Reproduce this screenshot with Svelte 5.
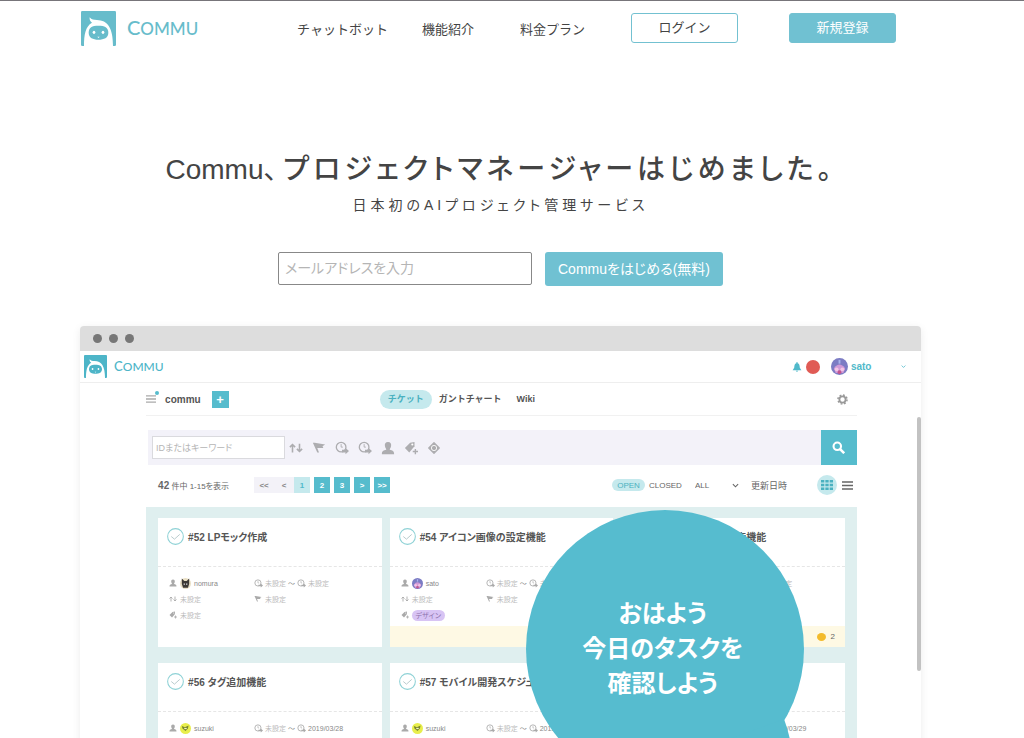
<script>
  let email = $state("");
  let keyword = $state("");
  let range = $state("ALL");

  const filters = ["arrows", "flag", "clock", "clock", "user", "tag", "target"];
  const pages = ["<<", "<", "1", "2", "3", ">", ">>"];

  const tickets = [
    { id: 52, title: "LPモック作成", user: "nomura", due: "未設定" },
    { id: 54, title: "アイコン画像の設定機能", user: "sato", due: "未設定", tag: "デザイン", footer: true },
    { id: 55, title: "アカウントの検索機能", user: "sato", due: "未設定", footer: true, comments: 2 },
    { id: 56, title: "タグ追加機能", user: "suzuki", due: "2019/03/28" },
    { id: 57, title: "モバイル開発スケジュール", user: "suzuki", due: "2019/03/28" },
    { id: 58, title: "通知機能", user: "suzuki", due: "2019/03/29" },
  ];
</script>

{#snippet icon(name, size = 14)}
  <svg class="icon" width={size} height={size} viewBox="0 0 16 16" aria-hidden="true"><use href="#{name}" /></svg>
{/snippet}

{#snippet logo()}
  <svg class="mark" viewBox="0 0 105 105" aria-hidden="true">
    <rect width="105" height="105" rx="4" fill="currentColor" />
    <path d="M9 105 C9 72 13 46 33 35 C27 31 25 25 26 19 C32 26 38 27 48 27 C80 28 96 50 96 105 Z" fill="#fff" />
    <path d="M23 65 C23 49 33 44 52 44 C71 44 82 49 82 65 C82 80 69 86 52 86 C36 86 23 80 23 65 Z" fill="currentColor" />
    <ellipse cx="39" cy="64" rx="4" ry="5" fill="#fff" />
    <ellipse cx="66" cy="64" rx="4" ry="5" fill="#fff" />
    <path d="M49 77 h7 l-3.500 4 z" fill="#fff" />
  </svg>
  <span class="wordmark">C<small>OMMU</small></span>
{/snippet}

{#snippet avatar(user)}
  <svg class="avatar" viewBox="0 0 18 18" aria-hidden="true">
    {#if user === "nomura"}
      <circle cx="9" cy="9" r="9" fill="#e9dfc4" />
      <path d="M3 1 L7 5 H11 L15 1 L15 10 L13 16 H5 L3 10 Z" fill="#3d3935" />
      <path d="M6 10 h2 M10 10 h2" stroke="#eee" stroke-width="2" />
    {:else if user === "suzuki"}
      <circle cx="9" cy="9" r="9" fill="#e8ee4c" />
      <path d="M3 5 L8 7 L14 4 L13 9 L9 13 L4 9 Z" fill="#77842f" />
      <path d="M7 9 h4" stroke="#f5f7c0" stroke-width="2" />
    {:else}
      <circle cx="9" cy="9" r="9" fill="#7c7cc4" />
      <path d="M3 11 Q9 3 15 11 L13 16 H5 Z" fill="#d09ad8" />
      <circle cx="6" cy="12" r="2" fill="#f4c5e4" />
      <circle cx="12" cy="12" r="2" fill="#f4c5e4" />
      <path d="M8 2 h2 v4 h-2 z" fill="#a9b4ec" />
      <circle cx="9" cy="15" r="2" fill="#c2568f" />
    {/if}
  </svg>
{/snippet}

<svg class="defs" aria-hidden="true">
  <symbol id="arrows" viewBox="0 0 16 16">
    <path d="M4 13 V4 M1 7 L4 4 L7 7 M12 3 V12 M9 9 L12 12 L15 9" fill="none" stroke="currentColor" stroke-width="1.800" />
  </symbol>
  <symbol id="flag" viewBox="0 0 16 16">
    <path d="M1 2 L3 2 L15 4 L12 6 L13 8 L6 8 L8 13 L6 13 Z" fill="currentColor" />
  </symbol>
  <symbol id="clock" viewBox="0 0 16 16">
    <circle cx="7" cy="7" r="5.500" fill="none" stroke="currentColor" stroke-width="1.500" />
    <path d="M7 3.500 V7 H9" fill="none" stroke="currentColor" />
    <path d="M8 10 H12 V8 L16 11.500 L12 15 V13 H8 Z" fill="currentColor" />
  </symbol>
  <symbol id="user" viewBox="0 0 16 16">
    <path d="M8 1 C11 1 12 3 11.500 6 C11 8 10 9 10 10 C13 11 15 11 15 15 H1 C1 11 3 11 6 10 C6 9 5 8 4.500 6 C4 3 5 1 8 1 Z" fill="currentColor" />
  </symbol>
  <symbol id="tag" viewBox="0 0 16 16">
    <path d="M1 8 L7 2 L12 1 L12 6 L6 13 Z" fill="currentColor" />
    <circle cx="9.500" cy="4" r="1.200" fill="#fff" />
    <path d="M13 9 V15 M10 12 H16" stroke="currentColor" stroke-width="1.600" />
  </symbol>
  <symbol id="target" viewBox="0 0 16 16">
    <path d="M8 2 L14 8 L8 14 L2 8 Z" fill="currentColor" stroke="currentColor" stroke-width="1.500" stroke-linejoin="round" />
    <circle cx="8" cy="8" r="3" fill="none" stroke="#fff" />
  </symbol>
  <symbol id="bell" viewBox="0 0 16 16">
    <path d="M8 0 C9 0 9 1 9 2 C12 3 12 5 12.500 9 L15 13 H1 L3.500 9 C4 5 4 3 7 2 C7 1 7 0 8 0 Z M6 14 H10 Q8 17 6 14 Z" fill="currentColor" />
  </symbol>
  <symbol id="gear" viewBox="0 0 16 16">
    <circle cx="8" cy="8" r="4.500" fill="none" stroke="currentColor" stroke-width="2.600" />
    <circle cx="8" cy="8" r="6.600" fill="none" stroke="currentColor" stroke-width="2.200" stroke-dasharray="2.600 2.580" />
  </symbol>
  <symbol id="search" viewBox="0 0 16 16">
    <circle cx="6.500" cy="6.500" r="4.600" fill="none" stroke="currentColor" stroke-width="2.600" />
    <path d="M10 10 L15 15" stroke="currentColor" stroke-width="3.200" />
  </symbol>
  <symbol id="chevron" viewBox="0 0 16 16">
    <path d="M2 5 L8 11 L14 5" fill="none" stroke="currentColor" stroke-width="2.500" />
  </symbol>
  <symbol id="grid" viewBox="0 0 16 16">
    <path d="M0 3 H16 M0 8 H16 M0 13 H16" stroke="currentColor" stroke-width="3.400" stroke-dasharray="4.400 1.400" />
  </symbol>
  <symbol id="lines" viewBox="0 0 16 16">
    <path d="M0 3 H16 M0 8 H16 M0 13 H16" stroke="currentColor" stroke-width="2.200" />
  </symbol>
  <symbol id="check" viewBox="0 0 16 16">
    <circle cx="8" cy="8" r="7.400" fill="none" stroke="#8fd2d6" />
    <path d="M4 8 L7 10.500 L12 6" fill="none" stroke="#b7c9cc" stroke-width="0.900" />
  </symbol>
</svg>

<div class="page">
  <header class="site-header">
    <a class="logo" href="/">{@render logo()}</a>
    <nav>
      <a href="#chatbot">チャットボット</a>
      <a href="#features">機能紹介</a>
      <a class="plan" href="#price">料金プラン</a>
      <a class="button login" href="#login">ログイン</a>
      <a class="button signup" href="#signup">新規登録</a>
    </nav>
  </header>

  <main>
    <h1><span>Commu、</span>プロジェクトマネージャーはじめました。</h1>
    <p class="lead">日本初のAIプロジェクト管理サービス</p>

    <form class="start" onsubmit={(e) => e.preventDefault()}>
      <input type="email" placeholder="メールアドレスを入力" aria-label="メールアドレス" bind:value={email} />
      <button>Commuをはじめる(無料)</button>
    </form>

    <section class="browser">
      <div class="titlebar"><i></i><i></i><i></i></div>

      <div class="app-header">
        <a class="logo" href="#app">{@render logo()}</a>
        <div class="account">
          {@render icon("bell", 10)}
          <span class="count"></span>
          {@render avatar("sato")}
          <b>sato</b>
          {@render icon("chevron", 5)}
        </div>
      </div>

      <div class="workspace">
        <div class="project">
          <button class="menu" aria-label="メニュー">{@render icon("lines", 10)}<i></i></button>
          <b>commu</b>
          <button class="add" aria-label="追加">+</button>
          <div class="tabs">
            <a class="active" href="#tickets">チケット</a>
            <a href="#gantt">ガントチャート</a>
            <a href="#wiki">Wiki</a>
          </div>
          <button class="settings" aria-label="設定">{@render icon("gear", 11)}</button>
        </div>

        <div class="search">
          <input placeholder="IDまたはキーワード" aria-label="キーワード" bind:value={keyword} />
          {#each filters as filter}
            <button class="filter" aria-label={filter}>{@render icon(filter)}</button>
          {/each}
          <button class="submit" aria-label="検索">{@render icon("search", 13)}</button>
        </div>

        <div class="listbar">
          <span class="total"><b>42</b> 件中 1-15を表示</span>
          <div class="pager">
            {#each pages as page, i}
              <button class:off={i < 2} class:current={page === "1"}>{page}</button>
            {/each}
          </div>
          <div class="view">
            <button class="open">OPEN</button>
            <button>CLOSED</button>
            <label class="range">
              <select aria-label="期間" bind:value={range}><option>ALL</option></select>
              {@render icon("chevron", 7)}
            </label>
            <span class="sort">更新日時</span>
            <button class="grid-view" aria-label="グリッド">{@render icon("grid", 12)}</button>
            <button class="list-view" aria-label="リスト">{@render icon("lines", 11)}</button>
          </div>
        </div>

        <div class="board">
          {#each tickets as ticket}
            <article>
              <h2>{@render icon("check", 17)}#{ticket.id} {ticket.title}</h2>
              <div class="meta">
                <span>{@render icon("user", 8)}{@render avatar(ticket.user)}{ticket.user}</span>
                <span class="dates">
                  {@render icon("clock", 9)}<em>未設定</em> 〜 {@render icon("clock", 9)}
                  {#if ticket.due === "未設定"}<em>未設定</em>{:else}{ticket.due}{/if}
                </span>
                <span>{@render icon("arrows", 8)}<em>未設定</em></span>
                <span>{@render icon("flag", 8)}<em>未設定</em></span>
                <span>
                  {@render icon("tag", 8)}
                  {#if ticket.tag}<mark>{ticket.tag}</mark>{:else}<em>未設定</em>{/if}
                </span>
              </div>
              {#if ticket.footer}
                <footer>{#if ticket.comments}<i></i>{ticket.comments}{/if}</footer>
              {/if}
            </article>
          {/each}
        </div>
      </div>

      <div class="scrollbar"></div>

      <div class="bubble">
        <svg viewBox="0 0 278 278" aria-hidden="true">
          <circle cx="139" cy="139" r="139" />
          <path d="M200 230 L258 209 Q263 222 266 240 L270 278 H200 Z" />
        </svg>
        <p>おはよう<br />今日のタスクを<br />確認しよう</p>
      </div>
    </section>
  </main>
</div>

<style>
  :global(body) {
    background: #fff;
  }

  .page {
    height: 100vh;
    overflow: hidden;
    box-sizing: border-box;
    padding-right: 23px;
    border-top: 1px solid #77757a;
    color: #444;
    font-family: "Liberation Sans", "Noto Sans CJK JP", sans-serif;
    font-size: 14px;
    font-feature-settings: "palt";
  }

  .page :is(button, input, select) {
    font: inherit;
    color: inherit;
    padding: 0;
    border: 0;
    background: none;
    box-sizing: border-box;
  }

  a {
    color: inherit;
    text-decoration: none;
  }

  svg {
    display: block;
    flex: none;
  }

  .defs {
    position: absolute;
    width: 0;
    height: 0;
  }

  .logo {
    display: flex;
    align-items: center;
    gap: 11px;
    color: #67bccb;
  }

  .mark {
    width: 35px;
    height: 35px;
  }

  .wordmark {
    font: 500 20px/24px Lato, sans-serif;
  }

  .wordmark small {
    font-size: 17px;
  }

  .site-header {
    display: flex;
    justify-content: space-between;
    align-items: center;
    height: 54px;
    padding: 0 105px 0 81px;
    box-sizing: border-box;
  }

  nav {
    display: flex;
    align-items: center;
    gap: 34px;
    font-size: 13px;
    font-feature-settings: normal;
  }

  .plan {
    margin: 0 12px;
  }

  .button {
    width: 107px;
    height: 30px;
    line-height: 28px;
    box-sizing: border-box;
    text-align: center;
    border: 1px solid #73c1d1;
    border-radius: 3px;
  }

  .signup {
    margin-left: 17px;
    background: #70c1d2;
    color: #fff;
  }

  h1 {
    margin: 94px 0 0;
    text-align: center;
    font-size: 28px;
    line-height: 42px;
    font-weight: 500;
    letter-spacing: 4px;
    white-space: nowrap;
  }

  h1 span {
    margin-right: 6px;
    font-weight: 400;
    letter-spacing: 0;
  }

  .lead {
    margin: 4px 0 0;
    text-align: center;
    line-height: 20px;
    letter-spacing: 4px;
  }

  .start {
    display: flex;
    justify-content: center;
    gap: 13px;
    margin-top: 37px;
  }

  .page .start input {
    width: 254px;
    height: 33px;
    padding: 0 6px 2px;
    border: 1px solid #888;
    border-radius: 2px;
  }

  input::placeholder {
    color: #b5b5b5;
    opacity: 1;
  }

  .page .start button {
    width: 178px;
    height: 34px;
    padding-bottom: 3px;
    background: #70c1d2;
    border-radius: 3px;
    color: #fff;
  }

  .browser {
    position: relative;
    width: 84%;
    margin: 40px auto 0;
    border-radius: 4px 4px 0 0;
    background: #fff;
    box-shadow: 0 2px 8px rgba(0, 0, 0, 0.08);
    font-size: 9px;
    color: #666;
  }

  .titlebar {
    display: flex;
    align-items: center;
    gap: 7px;
    height: 25px;
    padding-left: 13px;
    background: #ddd;
    border-radius: 4px 4px 0 0;
  }

  .titlebar i {
    width: 9px;
    height: 9px;
    border-radius: 50%;
    background: #777;
  }

  .app-header {
    display: flex;
    justify-content: space-between;
    align-items: center;
    height: 32px;
    padding: 0 15px 0 4px;
    box-sizing: border-box;
    border-bottom: 1px solid #eee;
  }

  .app-header .logo {
    gap: 7px;
    color: #4db5c8;
  }

  .app-header .mark {
    width: 23px;
    height: 23px;
  }

  .app-header .wordmark {
    font-size: 13px;
  }

  .app-header small {
    font-size: 12px;
  }

  .account {
    display: flex;
    align-items: center;
    color: #50b9ca;
    font-size: 10px;
  }

  .count {
    width: 14px;
    height: 14px;
    margin: 0 11px 0 4px;
    border-radius: 50%;
    background: #e05b55;
  }

  .account .avatar {
    width: 17px;
    height: 17px;
    margin-right: 3px;
  }

  .account b {
    width: 50px;
  }

  .workspace {
    padding: 0 64px 0 66px;
  }

  .project {
    display: flex;
    align-items: center;
    height: 33px;
    box-sizing: border-box;
    border-bottom: 1px solid #f1f1f1;
    font-size: 10px;
    font-weight: 700;
    color: #555;
  }

  .page .menu {
    position: relative;
    margin-right: 9px;
    color: #aaa;
  }

  .menu i {
    position: absolute;
    top: -3px;
    right: -3px;
    width: 4px;
    height: 4px;
    border-radius: 50%;
    background: #56bccd;
  }

  .page .add {
    width: 17px;
    height: 17px;
    margin-left: 11px;
    background: #56bccd;
    color: #fff;
    font-size: 13px;
    font-weight: 700;
    line-height: 15px;
  }

  .tabs {
    display: flex;
    align-items: center;
    gap: 15px;
    margin-left: 151px;
    font-feature-settings: normal;
  }

  .tabs a {
    line-height: 19px;
    font-size: 9px;
  }

  .tabs .active {
    width: 52px;
    margin-right: -8px;
    text-align: center;
    border-radius: 10px;
    background: #c5e9ed;
    color: #4bb1c0;
  }

  .page .settings {
    margin: 0 9px 0 auto;
    color: #999;
  }

  .page .filter {
    color: #adadb0;
  }

  .search {
    display: flex;
    align-items: center;
    gap: 9px;
    height: 35px;
    margin: 14px 0 0 2px;
    background: #f3f2f9;
  }

  .page .search input {
    width: 133px;
    height: 23px;
    margin: 0 -5px 0 4px;
    padding: 0 3px;
    border: 1px solid #dadade;
    background: #fff;
  }

  .page .submit {
    display: grid;
    place-items: center;
    width: 36px;
    height: 35px;
    margin-left: auto;
    background: #56bccd;
    color: #fff;
  }

  .listbar {
    display: flex;
    align-items: center;
    height: 42px;
    padding: 0 0 2px 12px;
    box-sizing: border-box;
  }

  .total {
    width: 96px;
    font-size: 8px;
  }

  .total b {
    font-size: 10px;
  }

  .pager {
    display: flex;
    gap: 4px;
  }

  .page .pager button {
    width: 16px;
    height: 16px;
    background: #56bccd;
    color: #fff;
    font-weight: 700;
    font-size: 8px;
  }

  .page .pager .off {
    width: 20px;
    margin-right: -4px;
    background: #f3f2f8;
    color: #888;
  }

  .page .pager .current {
    background: #c5e9ed;
    color: #50b9ca;
  }

  .view {
    display: flex;
    align-items: center;
    margin-left: auto;
    font-size: 8px;
  }

  .page .open {
    width: 33px;
    height: 12px;
    margin-right: 4px;
    border-radius: 6px;
    background: #c5e9ed;
    color: #4bb1c0;
  }

  .range {
    display: flex;
    align-items: center;
    margin: 0 12px 0 13px;
  }

  .range select {
    width: 37px;
    appearance: none;
  }

  .sort {
    width: 66px;
    font-size: 9px;
  }

  .page .grid-view {
    display: grid;
    place-items: center;
    width: 20px;
    height: 20px;
    border-radius: 50%;
    background: #c5e9ed;
    color: #4bb1c0;
  }

  .list-view {
    margin: 0 4px 0 5px;
  }

  .board {
    display: grid;
    grid-template-columns: repeat(3, 1fr);
    gap: 16px 8px;
    padding: 11px 12px;
    background: #dfefef;
  }

  article {
    display: flex;
    flex-direction: column;
    height: 129px;
    background: #fff;
  }

  h2 {
    display: flex;
    align-items: center;
    gap: 4px;
    height: 49px;
    margin: 0;
    padding: 0 9px 11px;
    box-sizing: border-box;
    border-bottom: 1px dashed #e6e6e6;
    font-size: 10px;
    color: #555;
    white-space: nowrap;
  }

  .meta {
    display: grid;
    grid-template-columns: 85px 1fr;
    grid-auto-rows: 16px;
    padding: 8px 0 0 11px;
    font-size: 7px;
    color: #888;
    white-space: nowrap;
  }

  .meta span {
    display: flex;
    align-items: center;
    gap: 3px;
  }

  .meta .dates {
    gap: 2px;
  }

  .meta .icon {
    color: #aaa;
  }

  .meta .avatar {
    width: 11px;
    height: 11px;
  }

  em {
    font-style: normal;
    color: #bbb;
  }

  mark {
    width: 33px;
    line-height: 11px;
    text-align: center;
    border-radius: 6px;
    background: #d8c4f4;
    color: #8c72ac;
  }

  footer {
    display: flex;
    justify-content: flex-end;
    align-items: center;
    gap: 4px;
    height: 21px;
    margin-top: auto;
    padding-right: 10px;
    background: #fef9e4;
    font-size: 8px;
  }

  footer i {
    width: 9px;
    height: 8px;
    border-radius: 50%;
    background: #f3bb2c;
  }

  .scrollbar {
    position: absolute;
    top: 91px;
    right: 0;
    width: 4px;
    height: 254px;
    border-radius: 2px;
    background: #c2c2c2;
  }

  .bubble {
    position: absolute;
    top: 184px;
    left: 53%;
    width: 278px;
    height: 278px;
    fill: #56bccf;
  }

  .bubble p {
    position: absolute;
    inset: 86px 0 auto;
    margin: 0;
    padding-right: 4px;
    text-align: center;
    color: #fff;
    font-size: 24px;
    font-weight: 700;
    line-height: 35px;
  }
</style>
